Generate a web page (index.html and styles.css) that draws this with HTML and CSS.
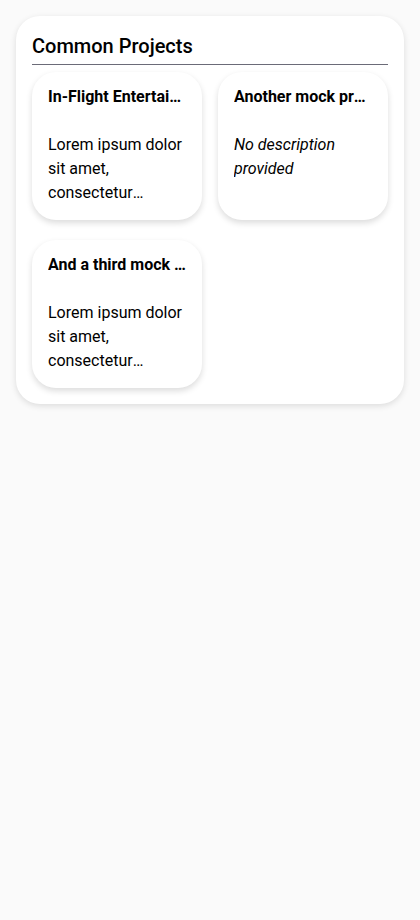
FILE: index.html
```html
<!DOCTYPE html>
<html>
<head>
<meta charset="utf-8">
<link rel="stylesheet" href="styles.css">
</head>
<body>
<section class="panel">
  <h2 class="panel-title">Common Projects</h2>
  <div class="grid">
    <div class="card">
      <div class="card-title">In-Flight Entertainment System</div>
      <div class="card-desc">Lorem ipsum dolor sit amet, consectetur adipiscing elit, sed do eiusmod tempor.</div>
    </div>
    <div class="card">
      <div class="card-title">Another mock project</div>
      <div class="card-desc empty">No description provided</div>
    </div>
    <div class="card">
      <div class="card-title">And a third mock project</div>
      <div class="card-desc">Lorem ipsum dolor sit amet, consectetur adipiscing elit, sed do eiusmod tempor.</div>
    </div>
  </div>
</section>
</body>
</html>
```
FILE: styles.css
```css
html, body {
  margin: 0;
  padding: 0;
  background: #fafafa;
  font-family: Roboto, "Liberation Sans", sans-serif;
  color: #000;
}
body {
  padding: 16px;
}
.panel {
  background: #fff;
  border-radius: 24px;
  padding: 16px;
  box-shadow: 0 2px 6px rgba(0,0,0,0.12);
}
.panel-title {
  margin: 0;
  font-size: 20px;
  font-weight: 500;
  line-height: 28px;
  padding-bottom: 4px;
  border-bottom: 1px solid #6b6b78;
}
.grid {
  display: grid;
  grid-template-columns: 1fr 1fr;
  column-gap: 16px;
  row-gap: 20px;
  margin-top: 7px;
}
.card {
  background: #fff;
  border-radius: 24px;
  padding: 13px 16px 15px;
  box-shadow: 0 3px 6px rgba(0,0,0,0.14);
  min-width: 0;
}
.card-title {
  font-size: 16px;
  font-weight: 700;
  line-height: 24px;
  white-space: nowrap;
  overflow: hidden;
  text-overflow: ellipsis;
}
.card-desc {
  margin-top: 24px;
  font-size: 16px;
  line-height: 24px;
  display: -webkit-box;
  -webkit-line-clamp: 3;
  -webkit-box-orient: vertical;
  overflow: hidden;
}
.card-desc.empty {
  font-style: italic;
}
```
